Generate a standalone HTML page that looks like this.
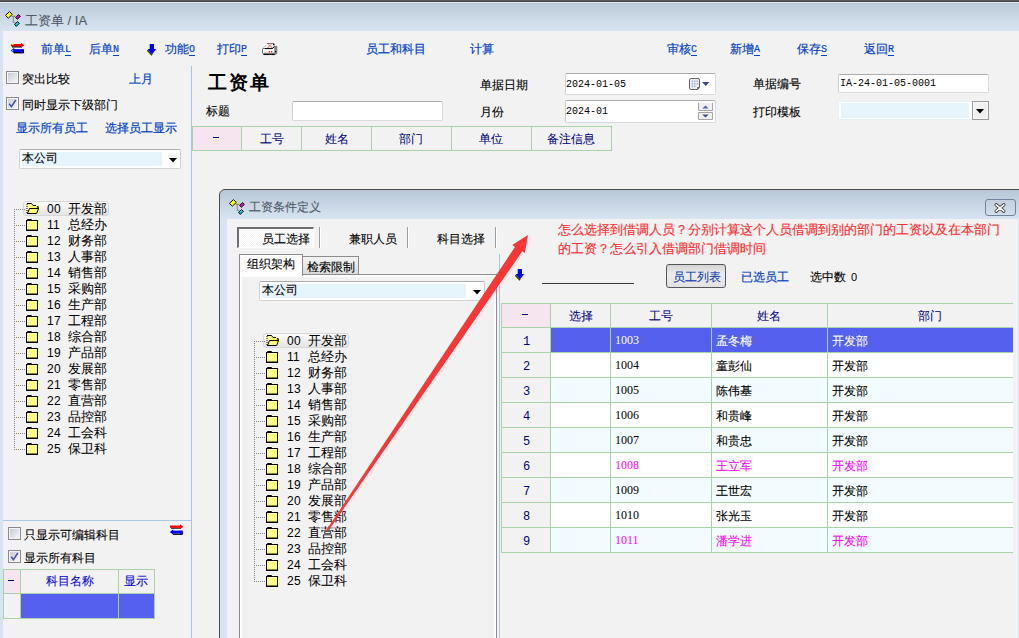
<!DOCTYPE html><html><head><meta charset="utf-8"><style>
*{margin:0;padding:0;box-sizing:border-box}
html,body{width:1019px;height:638px;overflow:hidden}
body{position:relative;background:#f2f2f2;font-family:"Liberation Sans",sans-serif;font-size:12px;line-height:12px;color:#000}
.t{position:absolute;white-space:nowrap;font-size:12px;line-height:12px;-webkit-text-stroke:0.1px currentColor}
.blue{-webkit-text-stroke:0.2px currentColor}
.nav{-webkit-text-stroke:0.05px currentColor}
.b{position:absolute}
.blue{color:#0444c8}
.nav{color:#000080}
.mono{font-family:"Liberation Mono",monospace;font-size:10px;line-height:10px;-webkit-text-stroke:0}
.ser{font-family:"Liberation Serif",serif;font-size:12px;line-height:12px;-webkit-text-stroke:0}
.acc{font-family:"Liberation Mono",monospace;font-size:10px;line-height:10px;display:inline-block;border-bottom:1px solid currentColor;padding-bottom:0;vertical-align:top;margin-top:2px;height:11px}
svg{position:absolute;overflow:visible}
.rn{font-family:"Liberation Mono",monospace;font-size:12px;line-height:12px;color:#000080;-webkit-text-stroke:0}
</style></head><body>
<div class="b" style="left:0px;top:0px;width:1019px;height:2px;background:linear-gradient(#5c5c5c,#444)"></div>
<div class="b" style="left:0px;top:2px;width:1019px;height:1px;background:#dfe5ec"></div>
<div class="b" style="left:0px;top:3px;width:1019px;height:28px;background:linear-gradient(#bbcad9,#d8e4f1)"></div>
<div class="b" style="left:0px;top:31px;width:3px;height:607px;background:#d6e3f1"></div>
<svg style="left:0px;top:8px" width="24" height="24" viewBox="0 8 24 24">
<path d="M11.6 16.4H15.4M13.3 16.4V22.3H15.2" stroke="#8c8c8c" stroke-width="1.1" fill="none"/>
<path d="M9.5 11.6L12.3 14.4L8.3 18.2L5.4 15.4Z" fill="#ffff00" stroke="#111" stroke-width="1"/>
<path d="M18.5 14.5L20.4 16.4L17.3 19.3L15.6 17.3Z" fill="#e800c8" stroke="#111" stroke-width="1"/>
<path d="M17.5 21.6L19.4 23.3L16.3 26.4L14.5 24.2Z" fill="#00d8e0" stroke="#111" stroke-width="1"/>
</svg>
<div class="t " style="left:25px;top:14px;color:#4e5866;font-size:13px;line-height:13px">工资单 / IA</div>
<svg style="left:0;top:30px" width="30" height="30" viewBox="0 30 30 30">
<rect x="14" y="47.3" width="7" height="1.8" fill="#fff"/>
<rect x="12" y="46.2" width="10" height="1.3" fill="#000"/>
<rect x="11" y="44" width="10.5" height="2.4" fill="#f00"/>
<path d="M21 42.8L24.3 45.2L21 47.8Z" fill="#f00"/>
<rect x="11.5" y="43.6" width="2" height="1.3" fill="#ff0"/>
<rect x="14" y="52" width="9.5" height="1.4" fill="#000"/>
<rect x="13.5" y="49.2" width="9" height="2.9" fill="#00f"/>
<path d="M14.3 47.8L10.8 50.6L14.3 53.4Z" fill="#00f"/>
<rect x="21" y="49" width="3" height="4" rx="1" fill="#00f"/>
<rect x="23" y="50" width="1" height="3" fill="#000"/>
<rect x="12" y="50" width="1.3" height="1.3" fill="#0ff"/>
</svg>
<div class="t blue" style="left:41px;top:43px;">前单<span class="acc">L</span></div>
<div class="t blue" style="left:89px;top:43px;">后单<span class="acc">N</span></div>
<svg style="left:146px;top:44px" width="12" height="13" viewBox="0 0 12 13">
<path d="M1.4 6.2L6 11.2" stroke="#3c3c00" stroke-width="1.6"/>
<path d="M3.7 0H8V5H10.2L6 10.6L1.6 5H3.7Z" fill="#0000ff"/>
</svg>
<div class="t blue" style="left:165px;top:43px;">功能<span class="acc">O</span></div>
<div class="t blue" style="left:217px;top:43px;">打印<span class="acc">P</span></div>
<svg style="left:258px;top:38px" width="22" height="22" viewBox="258 38 22 22">
<path d="M267 43.5H274" stroke="#7a7a7a" stroke-width="1"/>
<path d="M262.5 48.5L266.5 44.8" stroke="#9a9a9a" stroke-width="1" stroke-dasharray="1 0.8"/>
<path d="M263 48.5H272.5L274.5 46.3H276.8V53.2L275.3 54.6H264L262.5 53.2V49.5Z" fill="#fff" stroke="#606060" stroke-width="0.9"/>
<rect x="274.3" y="46.6" width="2.6" height="7.6" fill="#858585"/>
<path d="M263.5 52.6H274" stroke="#d8d8d8" stroke-width="1"/>
<path d="M267.5 48L271.5 44M268.5 44.2L272.5 48" stroke="#ff0000" stroke-width="1" stroke-dasharray="1 0.7"/>
<rect x="273" y="43.7" width="1.5" height="1.5" fill="#000"/>
<path d="M265 48.6H272.5L274.3 46.5" fill="none" stroke="#000" stroke-width="1"/>
<path d="M263.5 54.2H274.5" stroke="#000" stroke-width="1.5"/>
<rect x="268.8" y="51" width="1.3" height="1.3" fill="#f00"/><rect x="270.9" y="51" width="1.3" height="1.3" fill="#f00"/>
<rect x="275.1" y="51" width="1.2" height="1.2" fill="#000"/>
</svg>
<div class="t blue" style="left:366px;top:43px;">员工和科目</div>
<div class="t blue" style="left:470px;top:43px;">计算</div>
<div class="t blue" style="left:667px;top:43px;">审核<span class="acc">C</span></div>
<div class="t blue" style="left:730px;top:43px;">新增<span class="acc">A</span></div>
<div class="t blue" style="left:797px;top:43px;">保存<span class="acc">S</span></div>
<div class="t blue" style="left:864px;top:43px;">返回<span class="acc">R</span></div>
<div class="b" style="left:6px;top:71px;width:13px;height:13px;border:1px solid #8a8a8a;box-shadow:inset 0 0 0 1px #f4f4f4"></div>
<div class="b" style="left:8px;top:73px;width:9px;height:9px;background:linear-gradient(135deg,#c8ccd2,#f6f6f6)"></div>
<div class="t " style="left:22px;top:73px;">突出比较</div>
<div class="t blue" style="left:129px;top:73px;">上月</div>
<div class="b" style="left:6px;top:97px;width:13px;height:13px;border:1px solid #8a8a8a;box-shadow:inset 0 0 0 1px #f4f4f4"></div>
<div class="b" style="left:8px;top:99px;width:9px;height:9px;background:linear-gradient(135deg,#c8ccd2,#f6f6f6)"></div>
<svg style="left:6px;top:97px" width="13" height="13" viewBox="0 0 13 13"><path d="M3.2 6.8L5.4 9.6L9.8 3" stroke="#4458a8" stroke-width="1.6" fill="none"/></svg>
<div class="t " style="left:22px;top:99px;">同时显示下级部门</div>
<div class="t blue" style="left:16px;top:122px;">显示所有员工</div>
<div class="t blue" style="left:105px;top:122px;">选择员工显示</div>
<div class="b" style="left:19px;top:149px;width:162px;height:20px;border:1px solid #d2d2d2;border-top-color:#acacac;border-radius:2px;background:#fff"></div>
<div class="b" style="left:22px;top:152px;width:140px;height:14px;background:#e6f4fb"></div>
<div class="t " style="left:22px;top:152px;">本公司</div>
<svg style="left:169px;top:158px" width="9" height="5"><path d="M0 0H8L4 4.5Z" fill="#000"/></svg>
<div class="b" style="left:14px;top:209px;width:1px;height:241px;background:repeating-linear-gradient(#808080 0 1px,transparent 1px 2px)"></div>
<div class="b" style="left:23px;top:201px;width:86px;height:15px;border:1px solid #d8d8d8;border-radius:3px;background:linear-gradient(#fbfbfb,#e4e4e4)"></div>
<div class="b" style="left:14px;top:209px;width:11px;height:1px;background:repeating-linear-gradient(90deg,#808080 0 1px,transparent 1px 2px)"></div>
<svg style="left:26px;top:203px" width="14" height="13" viewBox="0 0 14 13">
<path d="M1 1H5.5L7 2.5H10.5L12.5 4.2L10.5 10.5H1Z" fill="#ffff70"/>
<path d="M1 0.5H5.5L7 2.5H10" fill="none" stroke="#000" stroke-width="1"/>
<path d="M10.8 3.6L12.8 4.4" stroke="#000" stroke-width="1.4"/>
<path d="M1.5 10.5L3.5 5.5H12.5" fill="none" stroke="#000" stroke-width="1"/>
<path d="M12.7 5L10.7 10.5" stroke="#000" stroke-width="1"/>
<path d="M1 10.5H10.5" stroke="#000" stroke-width="1"/>
<path d="M1 1V10" stroke="#000" stroke-width="1" stroke-dasharray="1 1"/>
</svg>
<div class="t " style="left:47px;top:203px;font-size:12px;line-height:12px;letter-spacing:0.33px;-webkit-text-stroke:0">00</div>
<div class="t " style="left:68px;top:202px;font-size:13px;line-height:13px;-webkit-text-stroke:0.05px currentColor">开发部</div>
<div class="b" style="left:14px;top:225px;width:11px;height:1px;background:repeating-linear-gradient(90deg,#808080 0 1px,transparent 1px 2px)"></div>
<svg style="left:26px;top:219px" width="13" height="13" viewBox="0 0 13 13">
<path d="M1.5 2V0.5H5.5L6.8 2" fill="#fff" stroke="#000" stroke-width="1"/>
<rect x="0.5" y="1.5" width="11" height="10" fill="#ffff80" stroke="#000" stroke-width="1"/>
<path d="M0.5 11.2H11.5" stroke="#000" stroke-width="1.4"/>
</svg>
<div class="t " style="left:47px;top:219px;font-size:12px;line-height:12px;letter-spacing:0.33px;-webkit-text-stroke:0">11</div>
<div class="t " style="left:68px;top:218px;font-size:13px;line-height:13px;-webkit-text-stroke:0.05px currentColor">总经办</div>
<div class="b" style="left:14px;top:241px;width:11px;height:1px;background:repeating-linear-gradient(90deg,#808080 0 1px,transparent 1px 2px)"></div>
<svg style="left:26px;top:235px" width="13" height="13" viewBox="0 0 13 13">
<path d="M1.5 2V0.5H5.5L6.8 2" fill="#fff" stroke="#000" stroke-width="1"/>
<rect x="0.5" y="1.5" width="11" height="10" fill="#ffff80" stroke="#000" stroke-width="1"/>
<path d="M0.5 11.2H11.5" stroke="#000" stroke-width="1.4"/>
</svg>
<div class="t " style="left:47px;top:235px;font-size:12px;line-height:12px;letter-spacing:0.33px;-webkit-text-stroke:0">12</div>
<div class="t " style="left:68px;top:234px;font-size:13px;line-height:13px;-webkit-text-stroke:0.05px currentColor">财务部</div>
<div class="b" style="left:14px;top:257px;width:11px;height:1px;background:repeating-linear-gradient(90deg,#808080 0 1px,transparent 1px 2px)"></div>
<svg style="left:26px;top:251px" width="13" height="13" viewBox="0 0 13 13">
<path d="M1.5 2V0.5H5.5L6.8 2" fill="#fff" stroke="#000" stroke-width="1"/>
<rect x="0.5" y="1.5" width="11" height="10" fill="#ffff80" stroke="#000" stroke-width="1"/>
<path d="M0.5 11.2H11.5" stroke="#000" stroke-width="1.4"/>
</svg>
<div class="t " style="left:47px;top:251px;font-size:12px;line-height:12px;letter-spacing:0.33px;-webkit-text-stroke:0">13</div>
<div class="t " style="left:68px;top:250px;font-size:13px;line-height:13px;-webkit-text-stroke:0.05px currentColor">人事部</div>
<div class="b" style="left:14px;top:273px;width:11px;height:1px;background:repeating-linear-gradient(90deg,#808080 0 1px,transparent 1px 2px)"></div>
<svg style="left:26px;top:267px" width="13" height="13" viewBox="0 0 13 13">
<path d="M1.5 2V0.5H5.5L6.8 2" fill="#fff" stroke="#000" stroke-width="1"/>
<rect x="0.5" y="1.5" width="11" height="10" fill="#ffff80" stroke="#000" stroke-width="1"/>
<path d="M0.5 11.2H11.5" stroke="#000" stroke-width="1.4"/>
</svg>
<div class="t " style="left:47px;top:267px;font-size:12px;line-height:12px;letter-spacing:0.33px;-webkit-text-stroke:0">14</div>
<div class="t " style="left:68px;top:266px;font-size:13px;line-height:13px;-webkit-text-stroke:0.05px currentColor">销售部</div>
<div class="b" style="left:14px;top:289px;width:11px;height:1px;background:repeating-linear-gradient(90deg,#808080 0 1px,transparent 1px 2px)"></div>
<svg style="left:26px;top:283px" width="13" height="13" viewBox="0 0 13 13">
<path d="M1.5 2V0.5H5.5L6.8 2" fill="#fff" stroke="#000" stroke-width="1"/>
<rect x="0.5" y="1.5" width="11" height="10" fill="#ffff80" stroke="#000" stroke-width="1"/>
<path d="M0.5 11.2H11.5" stroke="#000" stroke-width="1.4"/>
</svg>
<div class="t " style="left:47px;top:283px;font-size:12px;line-height:12px;letter-spacing:0.33px;-webkit-text-stroke:0">15</div>
<div class="t " style="left:68px;top:282px;font-size:13px;line-height:13px;-webkit-text-stroke:0.05px currentColor">采购部</div>
<div class="b" style="left:14px;top:305px;width:11px;height:1px;background:repeating-linear-gradient(90deg,#808080 0 1px,transparent 1px 2px)"></div>
<svg style="left:26px;top:299px" width="13" height="13" viewBox="0 0 13 13">
<path d="M1.5 2V0.5H5.5L6.8 2" fill="#fff" stroke="#000" stroke-width="1"/>
<rect x="0.5" y="1.5" width="11" height="10" fill="#ffff80" stroke="#000" stroke-width="1"/>
<path d="M0.5 11.2H11.5" stroke="#000" stroke-width="1.4"/>
</svg>
<div class="t " style="left:47px;top:299px;font-size:12px;line-height:12px;letter-spacing:0.33px;-webkit-text-stroke:0">16</div>
<div class="t " style="left:68px;top:298px;font-size:13px;line-height:13px;-webkit-text-stroke:0.05px currentColor">生产部</div>
<div class="b" style="left:14px;top:321px;width:11px;height:1px;background:repeating-linear-gradient(90deg,#808080 0 1px,transparent 1px 2px)"></div>
<svg style="left:26px;top:315px" width="13" height="13" viewBox="0 0 13 13">
<path d="M1.5 2V0.5H5.5L6.8 2" fill="#fff" stroke="#000" stroke-width="1"/>
<rect x="0.5" y="1.5" width="11" height="10" fill="#ffff80" stroke="#000" stroke-width="1"/>
<path d="M0.5 11.2H11.5" stroke="#000" stroke-width="1.4"/>
</svg>
<div class="t " style="left:47px;top:315px;font-size:12px;line-height:12px;letter-spacing:0.33px;-webkit-text-stroke:0">17</div>
<div class="t " style="left:68px;top:314px;font-size:13px;line-height:13px;-webkit-text-stroke:0.05px currentColor">工程部</div>
<div class="b" style="left:14px;top:337px;width:11px;height:1px;background:repeating-linear-gradient(90deg,#808080 0 1px,transparent 1px 2px)"></div>
<svg style="left:26px;top:331px" width="13" height="13" viewBox="0 0 13 13">
<path d="M1.5 2V0.5H5.5L6.8 2" fill="#fff" stroke="#000" stroke-width="1"/>
<rect x="0.5" y="1.5" width="11" height="10" fill="#ffff80" stroke="#000" stroke-width="1"/>
<path d="M0.5 11.2H11.5" stroke="#000" stroke-width="1.4"/>
</svg>
<div class="t " style="left:47px;top:331px;font-size:12px;line-height:12px;letter-spacing:0.33px;-webkit-text-stroke:0">18</div>
<div class="t " style="left:68px;top:330px;font-size:13px;line-height:13px;-webkit-text-stroke:0.05px currentColor">综合部</div>
<div class="b" style="left:14px;top:353px;width:11px;height:1px;background:repeating-linear-gradient(90deg,#808080 0 1px,transparent 1px 2px)"></div>
<svg style="left:26px;top:347px" width="13" height="13" viewBox="0 0 13 13">
<path d="M1.5 2V0.5H5.5L6.8 2" fill="#fff" stroke="#000" stroke-width="1"/>
<rect x="0.5" y="1.5" width="11" height="10" fill="#ffff80" stroke="#000" stroke-width="1"/>
<path d="M0.5 11.2H11.5" stroke="#000" stroke-width="1.4"/>
</svg>
<div class="t " style="left:47px;top:347px;font-size:12px;line-height:12px;letter-spacing:0.33px;-webkit-text-stroke:0">19</div>
<div class="t " style="left:68px;top:346px;font-size:13px;line-height:13px;-webkit-text-stroke:0.05px currentColor">产品部</div>
<div class="b" style="left:14px;top:369px;width:11px;height:1px;background:repeating-linear-gradient(90deg,#808080 0 1px,transparent 1px 2px)"></div>
<svg style="left:26px;top:363px" width="13" height="13" viewBox="0 0 13 13">
<path d="M1.5 2V0.5H5.5L6.8 2" fill="#fff" stroke="#000" stroke-width="1"/>
<rect x="0.5" y="1.5" width="11" height="10" fill="#ffff80" stroke="#000" stroke-width="1"/>
<path d="M0.5 11.2H11.5" stroke="#000" stroke-width="1.4"/>
</svg>
<div class="t " style="left:47px;top:363px;font-size:12px;line-height:12px;letter-spacing:0.33px;-webkit-text-stroke:0">20</div>
<div class="t " style="left:68px;top:362px;font-size:13px;line-height:13px;-webkit-text-stroke:0.05px currentColor">发展部</div>
<div class="b" style="left:14px;top:385px;width:11px;height:1px;background:repeating-linear-gradient(90deg,#808080 0 1px,transparent 1px 2px)"></div>
<svg style="left:26px;top:379px" width="13" height="13" viewBox="0 0 13 13">
<path d="M1.5 2V0.5H5.5L6.8 2" fill="#fff" stroke="#000" stroke-width="1"/>
<rect x="0.5" y="1.5" width="11" height="10" fill="#ffff80" stroke="#000" stroke-width="1"/>
<path d="M0.5 11.2H11.5" stroke="#000" stroke-width="1.4"/>
</svg>
<div class="t " style="left:47px;top:379px;font-size:12px;line-height:12px;letter-spacing:0.33px;-webkit-text-stroke:0">21</div>
<div class="t " style="left:68px;top:378px;font-size:13px;line-height:13px;-webkit-text-stroke:0.05px currentColor">零售部</div>
<div class="b" style="left:14px;top:401px;width:11px;height:1px;background:repeating-linear-gradient(90deg,#808080 0 1px,transparent 1px 2px)"></div>
<svg style="left:26px;top:395px" width="13" height="13" viewBox="0 0 13 13">
<path d="M1.5 2V0.5H5.5L6.8 2" fill="#fff" stroke="#000" stroke-width="1"/>
<rect x="0.5" y="1.5" width="11" height="10" fill="#ffff80" stroke="#000" stroke-width="1"/>
<path d="M0.5 11.2H11.5" stroke="#000" stroke-width="1.4"/>
</svg>
<div class="t " style="left:47px;top:395px;font-size:12px;line-height:12px;letter-spacing:0.33px;-webkit-text-stroke:0">22</div>
<div class="t " style="left:68px;top:394px;font-size:13px;line-height:13px;-webkit-text-stroke:0.05px currentColor">直营部</div>
<div class="b" style="left:14px;top:417px;width:11px;height:1px;background:repeating-linear-gradient(90deg,#808080 0 1px,transparent 1px 2px)"></div>
<svg style="left:26px;top:411px" width="13" height="13" viewBox="0 0 13 13">
<path d="M1.5 2V0.5H5.5L6.8 2" fill="#fff" stroke="#000" stroke-width="1"/>
<rect x="0.5" y="1.5" width="11" height="10" fill="#ffff80" stroke="#000" stroke-width="1"/>
<path d="M0.5 11.2H11.5" stroke="#000" stroke-width="1.4"/>
</svg>
<div class="t " style="left:47px;top:411px;font-size:12px;line-height:12px;letter-spacing:0.33px;-webkit-text-stroke:0">23</div>
<div class="t " style="left:68px;top:410px;font-size:13px;line-height:13px;-webkit-text-stroke:0.05px currentColor">品控部</div>
<div class="b" style="left:14px;top:433px;width:11px;height:1px;background:repeating-linear-gradient(90deg,#808080 0 1px,transparent 1px 2px)"></div>
<svg style="left:26px;top:427px" width="13" height="13" viewBox="0 0 13 13">
<path d="M1.5 2V0.5H5.5L6.8 2" fill="#fff" stroke="#000" stroke-width="1"/>
<rect x="0.5" y="1.5" width="11" height="10" fill="#ffff80" stroke="#000" stroke-width="1"/>
<path d="M0.5 11.2H11.5" stroke="#000" stroke-width="1.4"/>
</svg>
<div class="t " style="left:47px;top:427px;font-size:12px;line-height:12px;letter-spacing:0.33px;-webkit-text-stroke:0">24</div>
<div class="t " style="left:68px;top:426px;font-size:13px;line-height:13px;-webkit-text-stroke:0.05px currentColor">工会科</div>
<div class="b" style="left:14px;top:449px;width:11px;height:1px;background:repeating-linear-gradient(90deg,#808080 0 1px,transparent 1px 2px)"></div>
<svg style="left:26px;top:443px" width="13" height="13" viewBox="0 0 13 13">
<path d="M1.5 2V0.5H5.5L6.8 2" fill="#fff" stroke="#000" stroke-width="1"/>
<rect x="0.5" y="1.5" width="11" height="10" fill="#ffff80" stroke="#000" stroke-width="1"/>
<path d="M0.5 11.2H11.5" stroke="#000" stroke-width="1.4"/>
</svg>
<div class="t " style="left:47px;top:443px;font-size:12px;line-height:12px;letter-spacing:0.33px;-webkit-text-stroke:0">25</div>
<div class="t " style="left:68px;top:442px;font-size:13px;line-height:13px;-webkit-text-stroke:0.05px currentColor">保卫科</div>
<div class="b" style="left:3px;top:520px;width:188px;height:1px;background:#a9c9ea"></div>
<div class="b" style="left:8px;top:527px;width:13px;height:13px;border:1px solid #8a8a8a;box-shadow:inset 0 0 0 1px #f4f4f4"></div>
<div class="b" style="left:10px;top:529px;width:9px;height:9px;background:linear-gradient(135deg,#c8ccd2,#f6f6f6)"></div>
<div class="t " style="left:24px;top:529px;">只显示可编辑科目</div>
<svg style="left:160px;top:520px" width="30" height="20" viewBox="160 520 30 20">
<rect x="173" y="528.5" width="7" height="1.5" fill="#fff"/>
<rect x="171" y="527.5" width="10" height="1.2" fill="#000"/>
<rect x="170" y="525.5" width="10.5" height="2.3" fill="#f00"/>
<path d="M180 524.3L183.3 526.7L180 529.2Z" fill="#f00"/>
<rect x="173" y="533.5" width="9.5" height="1.4" fill="#000"/>
<rect x="172.5" y="530.6" width="9" height="2.8" fill="#00f"/>
<path d="M173.3 529.2L169.8 532L173.3 534.8Z" fill="#00f"/>
<rect x="180" y="530.4" width="3" height="4" rx="1" fill="#00f"/>
</svg>
<div class="b" style="left:8px;top:550px;width:13px;height:13px;border:1px solid #8a8a8a;box-shadow:inset 0 0 0 1px #f4f4f4"></div>
<div class="b" style="left:10px;top:552px;width:9px;height:9px;background:linear-gradient(135deg,#c8ccd2,#f6f6f6)"></div>
<svg style="left:8px;top:550px" width="13" height="13" viewBox="0 0 13 13"><path d="M3.2 6.8L5.4 9.6L9.8 3" stroke="#4458a8" stroke-width="1.6" fill="none"/></svg>
<div class="t " style="left:24px;top:552px;">显示所有科目</div>
<div class="b" style="left:3px;top:569px;width:152px;height:50px;border:1px solid #a8d2a8"></div>
<div class="b" style="left:4px;top:570px;width:16px;height:23px;background:#f6e4ee"></div>
<div class="b" style="left:20px;top:569px;width:1px;height:50px;background:#a8d2a8"></div>
<div class="b" style="left:118px;top:569px;width:1px;height:50px;background:#a8d2a8"></div>
<div class="b" style="left:3px;top:593px;width:152px;height:1px;background:#a8d2a8"></div>
<div class="b" style="left:21px;top:594px;width:97px;height:24px;background:#5561ee"></div>
<div class="b" style="left:119px;top:594px;width:35px;height:24px;background:#5561ee"></div>
<div class="b" style="left:8px;top:580px;width:6px;height:1px;background:#000080"></div>
<div class="t " style="left:46px;top:575px;color:#0808d8">科目名称</div>
<div class="t " style="left:124px;top:575px;color:#0808d8">显示</div>
<div class="b" style="left:191px;top:66px;width:1px;height:572px;background:#a6c6e8"></div>
<div class="t " style="left:208px;top:73px;font-size:19px;line-height:19px;font-weight:bold;color:#000;letter-spacing:2px;-webkit-text-stroke:0">工资单</div>
<div class="t " style="left:206px;top:105px;">标题</div>
<div class="b" style="left:292px;top:101px;width:151px;height:20px;border:1px solid #dadada;border-top-color:#ababab;border-left-color:#cfcfcf;border-radius:2px;background:#fff"></div>
<div class="t " style="left:480px;top:79px;">单据日期</div>
<div class="b" style="left:565px;top:73px;width:151px;height:22px;border:1px solid #dadada;border-top-color:#ababab;border-left-color:#cfcfcf;border-radius:2px;background:#fff"></div>
<div class="t mono" style="left:566px;top:80px;">2024-01-05</div>
<svg style="left:680px;top:72px" width="40" height="25" viewBox="680 72 40 25">
<path d="M689.5 80Q689.5 78.5 691 78.5H698Q699.5 78.5 699.5 80V87.5L697.5 89.5H691Q689.5 89.5 689.5 88Z" fill="#eef2f8" stroke="#6e6468" stroke-width="1"/>
<g fill="#aab6ca"><rect x="691.5" y="80.5" width="1.6" height="1.6"/><rect x="694" y="80.5" width="1.6" height="1.6"/><rect x="696.5" y="80.5" width="1.6" height="1.6"/>
<rect x="691.5" y="83" width="1.6" height="1.6"/><rect x="694" y="83" width="1.6" height="1.6"/><rect x="696.5" y="83" width="1.6" height="1.6"/>
<rect x="691.5" y="85.5" width="1.6" height="1.6"/><rect x="694" y="85.5" width="1.6" height="1.6"/></g>
<path d="M697.5 89.5V87.5H699.5" fill="none" stroke="#6e6468" stroke-width="1"/>
<path d="M702 82H709.5L705.75 86Z" fill="#3a4a80"/>
</svg>
<div class="t " style="left:480px;top:106px;">月份</div>
<div class="b" style="left:565px;top:100px;width:151px;height:23px;border:1px solid #dadada;border-top-color:#ababab;border-left-color:#cfcfcf;border-radius:2px;background:#fff"></div>
<div class="t mono" style="left:566px;top:107px;">2024-01</div>
<svg style="left:690px;top:100px" width="30" height="25" viewBox="690 100 30 25">
<path d="M698.5 103V110.5H712.5V103" fill="#f0f0f0" stroke="#a4a4a4" stroke-width="1"/>
<path d="M698.5 112.5H712.5V119.5H698.5Z" fill="#f0f0f0" stroke="#a4a4a4" stroke-width="1"/>
<path d="M702.3 108.6H708.7L705.5 105.5Z" fill="#4a64b8"/>
<path d="M702.3 114.6H708.7L705.5 117.6Z" fill="#3c4a80"/>
</svg>
<div class="t " style="left:753px;top:78px;">单据编号</div>
<div class="b" style="left:838px;top:74px;width:151px;height:19px;border:1px solid #dadada;border-top-color:#ababab;border-left-color:#cfcfcf;border-radius:2px;background:#fff"></div>
<div class="t mono" style="left:840px;top:79px;">IA-24-01-05-0001</div>
<div class="t " style="left:753px;top:106px;">打印模板</div>
<div class="b" style="left:838px;top:101px;width:151px;height:19px;border:1px solid #e2f2f8;background:#fff"></div>
<div class="b" style="left:841px;top:103px;width:128px;height:15px;background:#e6f4fb"></div>
<div class="b" style="left:972px;top:101px;width:17px;height:19px;border:1px solid #9a9a9a;background:#f0f0f0;box-shadow:inset 0 0 0 1px #fafafa"></div>
<svg style="left:976px;top:109px" width="9" height="5"><path d="M0 0H8L4 4.5Z" fill="#000"/></svg>
<div class="b" style="left:192px;top:126px;width:420px;height:25px;border:1px solid #a8d2a8"></div>
<div class="b" style="left:193px;top:127px;width:48px;height:23px;background:#f6e4ee"></div>
<div class="b" style="left:241px;top:126px;width:1px;height:25px;background:#a8d2a8"></div>
<div class="b" style="left:301px;top:126px;width:1px;height:25px;background:#a8d2a8"></div>
<div class="b" style="left:371px;top:126px;width:1px;height:25px;background:#a8d2a8"></div>
<div class="b" style="left:451px;top:126px;width:1px;height:25px;background:#a8d2a8"></div>
<div class="b" style="left:531px;top:126px;width:1px;height:25px;background:#a8d2a8"></div>
<div class="b" style="left:213px;top:137px;width:6px;height:1px;background:#000080"></div>
<div class="t nav" style="left:260px;top:133px;">工号</div>
<div class="t nav" style="left:325px;top:133px;">姓名</div>
<div class="t nav" style="left:399px;top:133px;">部门</div>
<div class="t nav" style="left:479px;top:133px;">单位</div>
<div class="t nav" style="left:547px;top:133px;">备注信息</div>
<div class="b" style="left:219px;top:189px;width:820px;height:470px;border:1px solid #4c4c4c;border-radius:6px 6px 0 0;background:linear-gradient(#b8c7d7,#d7e4f1 29px,#d7e4f1)"></div>
<div class="b" style="left:227px;top:219px;width:791px;height:419px;background:#f2f2f2"></div>
<svg style="left:224px;top:196px" width="24" height="24" viewBox="0 8 24 24">
<path d="M11.6 16.4H15.4M13.3 16.4V22.3H15.2" stroke="#8c8c8c" stroke-width="1.1" fill="none"/>
<path d="M9.5 11.6L12.3 14.4L8.3 18.2L5.4 15.4Z" fill="#ffff00" stroke="#111" stroke-width="1"/>
<path d="M18.5 14.5L20.4 16.4L17.3 19.3L15.6 17.3Z" fill="#e800c8" stroke="#111" stroke-width="1"/>
<path d="M17.5 21.6L19.4 23.3L16.3 26.4L14.5 24.2Z" fill="#00d8e0" stroke="#111" stroke-width="1"/>
</svg>
<div class="t " style="left:249px;top:201px;color:#4e5866">工资条件定义</div>
<div class="b" style="left:985px;top:199px;width:31px;height:17px;border:1px solid #7482a0;border-radius:3px;background:linear-gradient(#c4d0de,#d2deea)"></div>
<svg style="left:994px;top:203px" width="12" height="10" viewBox="0 0 12 10">
<path d="M2.2 1.8L9.8 8.2M9.8 1.8L2.2 8.2" stroke="#3a3a3a" stroke-width="3.4" stroke-linecap="round"/>
<path d="M2.2 1.8L9.8 8.2M9.8 1.8L2.2 8.2" stroke="#f6f6f6" stroke-width="1.7" stroke-linecap="round"/>
</svg>
<div class="b" style="left:237px;top:227px;width:77px;height:21px;border-top:2px solid #6e6e6e;border-left:2px solid #6e6e6e;border-right:1px solid #fff;border-bottom:1px solid #fff;background:repeating-conic-gradient(#f4f4f4 0 25%,#fff 0 50%) 0 0/2px 2px"></div>
<div class="t " style="left:262px;top:233px;">员工选择</div>
<div class="b" style="left:319px;top:227px;width:1px;height:21px;background:#9c9c9c"></div>
<div class="b" style="left:320px;top:227px;width:1px;height:21px;background:#fff"></div>
<div class="b" style="left:407px;top:227px;width:1px;height:21px;background:#9c9c9c"></div>
<div class="b" style="left:408px;top:227px;width:1px;height:21px;background:#fff"></div>
<div class="b" style="left:495px;top:227px;width:1px;height:21px;background:#9c9c9c"></div>
<div class="b" style="left:496px;top:227px;width:1px;height:21px;background:#fff"></div>
<div class="t " style="left:349px;top:233px;">兼职人员</div>
<div class="t " style="left:437px;top:233px;">科目选择</div>
<div class="b" style="left:239px;top:274px;width:258px;height:400px;border:1px solid #8c8c8c;background:#fff"></div>
<div class="b" style="left:242px;top:277px;width:252px;height:361px;background:#f2f2f2"></div>
<div class="b" style="left:239px;top:254px;width:64px;height:22px;border:1px solid #8c8c8c;border-bottom:none;background:#fff"></div>
<div class="t " style="left:247px;top:258px;">组织架构</div>
<div class="b" style="left:302px;top:256px;width:57px;height:19px;border:1px solid #8c8c8c;background:linear-gradient(#f4f4f4,#dadada)"></div>
<div class="t " style="left:307px;top:261px;">检索限制</div>
<div class="b" style="left:259px;top:281px;width:226px;height:20px;border:1px solid #d2d2d2;border-top-color:#acacac;border-radius:2px;background:#fff"></div>
<div class="b" style="left:262px;top:284px;width:204px;height:14px;background:#e6f4fb"></div>
<div class="t " style="left:262px;top:284px;">本公司</div>
<svg style="left:473px;top:290px" width="9" height="5"><path d="M0 0H8L4 4.5Z" fill="#000"/></svg>
<div class="b" style="left:254px;top:341px;width:1px;height:241px;background:repeating-linear-gradient(#808080 0 1px,transparent 1px 2px)"></div>
<div class="b" style="left:263px;top:333px;width:86px;height:15px;border:1px solid #d8d8d8;border-radius:3px;background:linear-gradient(#fbfbfb,#e4e4e4)"></div>
<div class="b" style="left:254px;top:341px;width:11px;height:1px;background:repeating-linear-gradient(90deg,#808080 0 1px,transparent 1px 2px)"></div>
<svg style="left:266px;top:335px" width="14" height="13" viewBox="0 0 14 13">
<path d="M1 1H5.5L7 2.5H10.5L12.5 4.2L10.5 10.5H1Z" fill="#ffff70"/>
<path d="M1 0.5H5.5L7 2.5H10" fill="none" stroke="#000" stroke-width="1"/>
<path d="M10.8 3.6L12.8 4.4" stroke="#000" stroke-width="1.4"/>
<path d="M1.5 10.5L3.5 5.5H12.5" fill="none" stroke="#000" stroke-width="1"/>
<path d="M12.7 5L10.7 10.5" stroke="#000" stroke-width="1"/>
<path d="M1 10.5H10.5" stroke="#000" stroke-width="1"/>
<path d="M1 1V10" stroke="#000" stroke-width="1" stroke-dasharray="1 1"/>
</svg>
<div class="t " style="left:287px;top:335px;font-size:12px;line-height:12px;letter-spacing:0.33px;-webkit-text-stroke:0">00</div>
<div class="t " style="left:308px;top:334px;font-size:13px;line-height:13px;-webkit-text-stroke:0.05px currentColor">开发部</div>
<div class="b" style="left:254px;top:357px;width:11px;height:1px;background:repeating-linear-gradient(90deg,#808080 0 1px,transparent 1px 2px)"></div>
<svg style="left:266px;top:351px" width="13" height="13" viewBox="0 0 13 13">
<path d="M1.5 2V0.5H5.5L6.8 2" fill="#fff" stroke="#000" stroke-width="1"/>
<rect x="0.5" y="1.5" width="11" height="10" fill="#ffff80" stroke="#000" stroke-width="1"/>
<path d="M0.5 11.2H11.5" stroke="#000" stroke-width="1.4"/>
</svg>
<div class="t " style="left:287px;top:351px;font-size:12px;line-height:12px;letter-spacing:0.33px;-webkit-text-stroke:0">11</div>
<div class="t " style="left:308px;top:350px;font-size:13px;line-height:13px;-webkit-text-stroke:0.05px currentColor">总经办</div>
<div class="b" style="left:254px;top:373px;width:11px;height:1px;background:repeating-linear-gradient(90deg,#808080 0 1px,transparent 1px 2px)"></div>
<svg style="left:266px;top:367px" width="13" height="13" viewBox="0 0 13 13">
<path d="M1.5 2V0.5H5.5L6.8 2" fill="#fff" stroke="#000" stroke-width="1"/>
<rect x="0.5" y="1.5" width="11" height="10" fill="#ffff80" stroke="#000" stroke-width="1"/>
<path d="M0.5 11.2H11.5" stroke="#000" stroke-width="1.4"/>
</svg>
<div class="t " style="left:287px;top:367px;font-size:12px;line-height:12px;letter-spacing:0.33px;-webkit-text-stroke:0">12</div>
<div class="t " style="left:308px;top:366px;font-size:13px;line-height:13px;-webkit-text-stroke:0.05px currentColor">财务部</div>
<div class="b" style="left:254px;top:389px;width:11px;height:1px;background:repeating-linear-gradient(90deg,#808080 0 1px,transparent 1px 2px)"></div>
<svg style="left:266px;top:383px" width="13" height="13" viewBox="0 0 13 13">
<path d="M1.5 2V0.5H5.5L6.8 2" fill="#fff" stroke="#000" stroke-width="1"/>
<rect x="0.5" y="1.5" width="11" height="10" fill="#ffff80" stroke="#000" stroke-width="1"/>
<path d="M0.5 11.2H11.5" stroke="#000" stroke-width="1.4"/>
</svg>
<div class="t " style="left:287px;top:383px;font-size:12px;line-height:12px;letter-spacing:0.33px;-webkit-text-stroke:0">13</div>
<div class="t " style="left:308px;top:382px;font-size:13px;line-height:13px;-webkit-text-stroke:0.05px currentColor">人事部</div>
<div class="b" style="left:254px;top:405px;width:11px;height:1px;background:repeating-linear-gradient(90deg,#808080 0 1px,transparent 1px 2px)"></div>
<svg style="left:266px;top:399px" width="13" height="13" viewBox="0 0 13 13">
<path d="M1.5 2V0.5H5.5L6.8 2" fill="#fff" stroke="#000" stroke-width="1"/>
<rect x="0.5" y="1.5" width="11" height="10" fill="#ffff80" stroke="#000" stroke-width="1"/>
<path d="M0.5 11.2H11.5" stroke="#000" stroke-width="1.4"/>
</svg>
<div class="t " style="left:287px;top:399px;font-size:12px;line-height:12px;letter-spacing:0.33px;-webkit-text-stroke:0">14</div>
<div class="t " style="left:308px;top:398px;font-size:13px;line-height:13px;-webkit-text-stroke:0.05px currentColor">销售部</div>
<div class="b" style="left:254px;top:421px;width:11px;height:1px;background:repeating-linear-gradient(90deg,#808080 0 1px,transparent 1px 2px)"></div>
<svg style="left:266px;top:415px" width="13" height="13" viewBox="0 0 13 13">
<path d="M1.5 2V0.5H5.5L6.8 2" fill="#fff" stroke="#000" stroke-width="1"/>
<rect x="0.5" y="1.5" width="11" height="10" fill="#ffff80" stroke="#000" stroke-width="1"/>
<path d="M0.5 11.2H11.5" stroke="#000" stroke-width="1.4"/>
</svg>
<div class="t " style="left:287px;top:415px;font-size:12px;line-height:12px;letter-spacing:0.33px;-webkit-text-stroke:0">15</div>
<div class="t " style="left:308px;top:414px;font-size:13px;line-height:13px;-webkit-text-stroke:0.05px currentColor">采购部</div>
<div class="b" style="left:254px;top:437px;width:11px;height:1px;background:repeating-linear-gradient(90deg,#808080 0 1px,transparent 1px 2px)"></div>
<svg style="left:266px;top:431px" width="13" height="13" viewBox="0 0 13 13">
<path d="M1.5 2V0.5H5.5L6.8 2" fill="#fff" stroke="#000" stroke-width="1"/>
<rect x="0.5" y="1.5" width="11" height="10" fill="#ffff80" stroke="#000" stroke-width="1"/>
<path d="M0.5 11.2H11.5" stroke="#000" stroke-width="1.4"/>
</svg>
<div class="t " style="left:287px;top:431px;font-size:12px;line-height:12px;letter-spacing:0.33px;-webkit-text-stroke:0">16</div>
<div class="t " style="left:308px;top:430px;font-size:13px;line-height:13px;-webkit-text-stroke:0.05px currentColor">生产部</div>
<div class="b" style="left:254px;top:453px;width:11px;height:1px;background:repeating-linear-gradient(90deg,#808080 0 1px,transparent 1px 2px)"></div>
<svg style="left:266px;top:447px" width="13" height="13" viewBox="0 0 13 13">
<path d="M1.5 2V0.5H5.5L6.8 2" fill="#fff" stroke="#000" stroke-width="1"/>
<rect x="0.5" y="1.5" width="11" height="10" fill="#ffff80" stroke="#000" stroke-width="1"/>
<path d="M0.5 11.2H11.5" stroke="#000" stroke-width="1.4"/>
</svg>
<div class="t " style="left:287px;top:447px;font-size:12px;line-height:12px;letter-spacing:0.33px;-webkit-text-stroke:0">17</div>
<div class="t " style="left:308px;top:446px;font-size:13px;line-height:13px;-webkit-text-stroke:0.05px currentColor">工程部</div>
<div class="b" style="left:254px;top:469px;width:11px;height:1px;background:repeating-linear-gradient(90deg,#808080 0 1px,transparent 1px 2px)"></div>
<svg style="left:266px;top:463px" width="13" height="13" viewBox="0 0 13 13">
<path d="M1.5 2V0.5H5.5L6.8 2" fill="#fff" stroke="#000" stroke-width="1"/>
<rect x="0.5" y="1.5" width="11" height="10" fill="#ffff80" stroke="#000" stroke-width="1"/>
<path d="M0.5 11.2H11.5" stroke="#000" stroke-width="1.4"/>
</svg>
<div class="t " style="left:287px;top:463px;font-size:12px;line-height:12px;letter-spacing:0.33px;-webkit-text-stroke:0">18</div>
<div class="t " style="left:308px;top:462px;font-size:13px;line-height:13px;-webkit-text-stroke:0.05px currentColor">综合部</div>
<div class="b" style="left:254px;top:485px;width:11px;height:1px;background:repeating-linear-gradient(90deg,#808080 0 1px,transparent 1px 2px)"></div>
<svg style="left:266px;top:479px" width="13" height="13" viewBox="0 0 13 13">
<path d="M1.5 2V0.5H5.5L6.8 2" fill="#fff" stroke="#000" stroke-width="1"/>
<rect x="0.5" y="1.5" width="11" height="10" fill="#ffff80" stroke="#000" stroke-width="1"/>
<path d="M0.5 11.2H11.5" stroke="#000" stroke-width="1.4"/>
</svg>
<div class="t " style="left:287px;top:479px;font-size:12px;line-height:12px;letter-spacing:0.33px;-webkit-text-stroke:0">19</div>
<div class="t " style="left:308px;top:478px;font-size:13px;line-height:13px;-webkit-text-stroke:0.05px currentColor">产品部</div>
<div class="b" style="left:254px;top:501px;width:11px;height:1px;background:repeating-linear-gradient(90deg,#808080 0 1px,transparent 1px 2px)"></div>
<svg style="left:266px;top:495px" width="13" height="13" viewBox="0 0 13 13">
<path d="M1.5 2V0.5H5.5L6.8 2" fill="#fff" stroke="#000" stroke-width="1"/>
<rect x="0.5" y="1.5" width="11" height="10" fill="#ffff80" stroke="#000" stroke-width="1"/>
<path d="M0.5 11.2H11.5" stroke="#000" stroke-width="1.4"/>
</svg>
<div class="t " style="left:287px;top:495px;font-size:12px;line-height:12px;letter-spacing:0.33px;-webkit-text-stroke:0">20</div>
<div class="t " style="left:308px;top:494px;font-size:13px;line-height:13px;-webkit-text-stroke:0.05px currentColor">发展部</div>
<div class="b" style="left:254px;top:517px;width:11px;height:1px;background:repeating-linear-gradient(90deg,#808080 0 1px,transparent 1px 2px)"></div>
<svg style="left:266px;top:511px" width="13" height="13" viewBox="0 0 13 13">
<path d="M1.5 2V0.5H5.5L6.8 2" fill="#fff" stroke="#000" stroke-width="1"/>
<rect x="0.5" y="1.5" width="11" height="10" fill="#ffff80" stroke="#000" stroke-width="1"/>
<path d="M0.5 11.2H11.5" stroke="#000" stroke-width="1.4"/>
</svg>
<div class="t " style="left:287px;top:511px;font-size:12px;line-height:12px;letter-spacing:0.33px;-webkit-text-stroke:0">21</div>
<div class="t " style="left:308px;top:510px;font-size:13px;line-height:13px;-webkit-text-stroke:0.05px currentColor">零售部</div>
<div class="b" style="left:254px;top:533px;width:11px;height:1px;background:repeating-linear-gradient(90deg,#808080 0 1px,transparent 1px 2px)"></div>
<svg style="left:266px;top:527px" width="13" height="13" viewBox="0 0 13 13">
<path d="M1.5 2V0.5H5.5L6.8 2" fill="#fff" stroke="#000" stroke-width="1"/>
<rect x="0.5" y="1.5" width="11" height="10" fill="#ffff80" stroke="#000" stroke-width="1"/>
<path d="M0.5 11.2H11.5" stroke="#000" stroke-width="1.4"/>
</svg>
<div class="t " style="left:287px;top:527px;font-size:12px;line-height:12px;letter-spacing:0.33px;-webkit-text-stroke:0">22</div>
<div class="t " style="left:308px;top:526px;font-size:13px;line-height:13px;-webkit-text-stroke:0.05px currentColor">直营部</div>
<div class="b" style="left:254px;top:549px;width:11px;height:1px;background:repeating-linear-gradient(90deg,#808080 0 1px,transparent 1px 2px)"></div>
<svg style="left:266px;top:543px" width="13" height="13" viewBox="0 0 13 13">
<path d="M1.5 2V0.5H5.5L6.8 2" fill="#fff" stroke="#000" stroke-width="1"/>
<rect x="0.5" y="1.5" width="11" height="10" fill="#ffff80" stroke="#000" stroke-width="1"/>
<path d="M0.5 11.2H11.5" stroke="#000" stroke-width="1.4"/>
</svg>
<div class="t " style="left:287px;top:543px;font-size:12px;line-height:12px;letter-spacing:0.33px;-webkit-text-stroke:0">23</div>
<div class="t " style="left:308px;top:542px;font-size:13px;line-height:13px;-webkit-text-stroke:0.05px currentColor">品控部</div>
<div class="b" style="left:254px;top:565px;width:11px;height:1px;background:repeating-linear-gradient(90deg,#808080 0 1px,transparent 1px 2px)"></div>
<svg style="left:266px;top:559px" width="13" height="13" viewBox="0 0 13 13">
<path d="M1.5 2V0.5H5.5L6.8 2" fill="#fff" stroke="#000" stroke-width="1"/>
<rect x="0.5" y="1.5" width="11" height="10" fill="#ffff80" stroke="#000" stroke-width="1"/>
<path d="M0.5 11.2H11.5" stroke="#000" stroke-width="1.4"/>
</svg>
<div class="t " style="left:287px;top:559px;font-size:12px;line-height:12px;letter-spacing:0.33px;-webkit-text-stroke:0">24</div>
<div class="t " style="left:308px;top:558px;font-size:13px;line-height:13px;-webkit-text-stroke:0.05px currentColor">工会科</div>
<div class="b" style="left:254px;top:581px;width:11px;height:1px;background:repeating-linear-gradient(90deg,#808080 0 1px,transparent 1px 2px)"></div>
<svg style="left:266px;top:575px" width="13" height="13" viewBox="0 0 13 13">
<path d="M1.5 2V0.5H5.5L6.8 2" fill="#fff" stroke="#000" stroke-width="1"/>
<rect x="0.5" y="1.5" width="11" height="10" fill="#ffff80" stroke="#000" stroke-width="1"/>
<path d="M0.5 11.2H11.5" stroke="#000" stroke-width="1.4"/>
</svg>
<div class="t " style="left:287px;top:575px;font-size:12px;line-height:12px;letter-spacing:0.33px;-webkit-text-stroke:0">25</div>
<div class="t " style="left:308px;top:574px;font-size:13px;line-height:13px;-webkit-text-stroke:0.05px currentColor">保卫科</div>
<div class="b" style="left:499px;top:254px;width:1px;height:384px;background:#a6c6e8"></div>
<div class="t " style="left:558px;top:223px;color:#ff3030;font-size:13px;line-height:13px;-webkit-text-stroke:0.15px currentColor">怎么选择到借调人员？分别计算这个人员借调到别的部门的工资以及在本部门</div>
<div class="t " style="left:558px;top:242px;color:#ff3030;font-size:13px;line-height:13px;-webkit-text-stroke:0.15px currentColor">的工资？怎么引入借调部门借调时间</div>
<svg style="left:514px;top:269px" width="12" height="13" viewBox="0 0 12 13">
<path d="M1.4 6.2L6 11.2" stroke="#3c3c00" stroke-width="1.6"/>
<path d="M3.7 0H8V5H10.2L6 10.6L1.6 5H3.7Z" fill="#0000ff"/>
</svg>
<div class="b" style="left:542px;top:283px;width:92px;height:1px;background:#3c3c3c"></div>
<div class="b" style="left:666px;top:264px;width:60px;height:24px;border:1px solid #555;border-radius:3px;background:linear-gradient(#d4d4d4,#ececec 40%,#e2e2e2)"></div>
<div class="t " style="left:673px;top:271px;color:#1040b0">员工列表</div>
<div class="t blue" style="left:741px;top:271px;">已选员工</div>
<div class="t " style="left:810px;top:271px;">选中数</div>
<div class="t " style="left:851px;top:272px;font-size:11px;line-height:11px;-webkit-text-stroke:0">0</div>
<div class="b" style="left:501px;top:303px;width:512px;height:250px;background:#fff"></div>
<div class="b" style="left:502px;top:304px;width:48px;height:23px;background:#f6e4ee"></div>
<div class="b" style="left:551px;top:304px;width:462px;height:23px;background:#f2f2f2"></div>
<div class="b" style="left:502px;top:328px;width:48px;height:24px;background:#f2f2f2"></div>
<div class="b" style="left:551px;top:328px;width:462px;height:24px;background:#5561ee"></div>
<div class="t rn" style="left:523px;top:336px;">1</div>
<div class="t ser" style="left:615px;top:334px;color:#fff">1003</div>
<div class="t " style="left:716px;top:335px;color:#fff">孟冬梅</div>
<div class="t " style="left:832px;top:335px;color:#fff">开发部</div>
<div class="b" style="left:502px;top:353px;width:48px;height:24px;background:#f2f2f2"></div>
<div class="b" style="left:551px;top:353px;width:462px;height:24px;background:#ffffff"></div>
<div class="t rn" style="left:523px;top:361px;">2</div>
<div class="t ser" style="left:615px;top:359px;color:#000">1004</div>
<div class="t " style="left:716px;top:360px;color:#000">童彭仙</div>
<div class="t " style="left:832px;top:360px;color:#000">开发部</div>
<div class="b" style="left:502px;top:378px;width:48px;height:24px;background:#f2f2f2"></div>
<div class="b" style="left:551px;top:378px;width:462px;height:24px;background:#f2fbfd"></div>
<div class="t rn" style="left:523px;top:386px;">3</div>
<div class="t ser" style="left:615px;top:384px;color:#000">1005</div>
<div class="t " style="left:716px;top:385px;color:#000">陈伟基</div>
<div class="t " style="left:832px;top:385px;color:#000">开发部</div>
<div class="b" style="left:502px;top:403px;width:48px;height:24px;background:#f2f2f2"></div>
<div class="b" style="left:551px;top:403px;width:462px;height:24px;background:#ffffff"></div>
<div class="t rn" style="left:523px;top:411px;">4</div>
<div class="t ser" style="left:615px;top:409px;color:#000">1006</div>
<div class="t " style="left:716px;top:410px;color:#000">和贵峰</div>
<div class="t " style="left:832px;top:410px;color:#000">开发部</div>
<div class="b" style="left:502px;top:428px;width:48px;height:24px;background:#f2f2f2"></div>
<div class="b" style="left:551px;top:428px;width:462px;height:24px;background:#f2fbfd"></div>
<div class="t rn" style="left:523px;top:436px;">5</div>
<div class="t ser" style="left:615px;top:434px;color:#000">1007</div>
<div class="t " style="left:716px;top:435px;color:#000">和贵忠</div>
<div class="t " style="left:832px;top:435px;color:#000">开发部</div>
<div class="b" style="left:502px;top:453px;width:48px;height:24px;background:#f2f2f2"></div>
<div class="b" style="left:551px;top:453px;width:462px;height:24px;background:#ffffff"></div>
<div class="t rn" style="left:523px;top:461px;">6</div>
<div class="t ser" style="left:615px;top:459px;color:#ff00ff">1008</div>
<div class="t " style="left:716px;top:460px;color:#ff00ff">王立军</div>
<div class="t " style="left:832px;top:460px;color:#ff00ff">开发部</div>
<div class="b" style="left:502px;top:478px;width:48px;height:24px;background:#f2f2f2"></div>
<div class="b" style="left:551px;top:478px;width:462px;height:24px;background:#f2fbfd"></div>
<div class="t rn" style="left:523px;top:486px;">7</div>
<div class="t ser" style="left:615px;top:484px;color:#000">1009</div>
<div class="t " style="left:716px;top:485px;color:#000">王世宏</div>
<div class="t " style="left:832px;top:485px;color:#000">开发部</div>
<div class="b" style="left:502px;top:503px;width:48px;height:24px;background:#f2f2f2"></div>
<div class="b" style="left:551px;top:503px;width:462px;height:24px;background:#ffffff"></div>
<div class="t rn" style="left:523px;top:511px;">8</div>
<div class="t ser" style="left:615px;top:509px;color:#000">1010</div>
<div class="t " style="left:716px;top:510px;color:#000">张光玉</div>
<div class="t " style="left:832px;top:510px;color:#000">开发部</div>
<div class="b" style="left:502px;top:528px;width:48px;height:24px;background:#f2f2f2"></div>
<div class="b" style="left:551px;top:528px;width:462px;height:24px;background:#f2fbfd"></div>
<div class="t rn" style="left:523px;top:536px;">9</div>
<div class="t ser" style="left:615px;top:534px;color:#ff00ff">1011</div>
<div class="t " style="left:716px;top:535px;color:#ff00ff">潘学进</div>
<div class="t " style="left:832px;top:535px;color:#ff00ff">开发部</div>
<div class="b" style="left:501px;top:303px;width:1px;height:250px;background:#a8d2a8"></div>
<div class="b" style="left:550px;top:303px;width:1px;height:250px;background:#a8d2a8"></div>
<div class="b" style="left:610px;top:303px;width:1px;height:250px;background:#a8d2a8"></div>
<div class="b" style="left:711px;top:303px;width:1px;height:250px;background:#a8d2a8"></div>
<div class="b" style="left:827px;top:303px;width:1px;height:250px;background:#a8d2a8"></div>
<div class="b" style="left:501px;top:303px;width:512px;height:1px;background:#a8d2a8"></div>
<div class="b" style="left:501px;top:327px;width:512px;height:1px;background:#a8d2a8"></div>
<div class="b" style="left:501px;top:352px;width:512px;height:1px;background:#a8d2a8"></div>
<div class="b" style="left:501px;top:377px;width:512px;height:1px;background:#a8d2a8"></div>
<div class="b" style="left:501px;top:402px;width:512px;height:1px;background:#a8d2a8"></div>
<div class="b" style="left:501px;top:427px;width:512px;height:1px;background:#a8d2a8"></div>
<div class="b" style="left:501px;top:452px;width:512px;height:1px;background:#a8d2a8"></div>
<div class="b" style="left:501px;top:477px;width:512px;height:1px;background:#a8d2a8"></div>
<div class="b" style="left:501px;top:502px;width:512px;height:1px;background:#a8d2a8"></div>
<div class="b" style="left:501px;top:527px;width:512px;height:1px;background:#a8d2a8"></div>
<div class="b" style="left:501px;top:552px;width:512px;height:1px;background:#a8d2a8"></div>
<div class="b" style="left:522px;top:314px;width:6px;height:1px;background:#000080"></div>
<div class="t nav" style="left:569px;top:310px;">选择</div>
<div class="t nav" style="left:649px;top:310px;">工号</div>
<div class="t nav" style="left:757px;top:310px;">姓名</div>
<div class="t nav" style="left:918px;top:310px;">部门</div>
<svg style="left:0;top:0" width="1019" height="638" viewBox="0 0 1019 638">
<path d="M326 530.6L514.8 247.2L512.5 244.7L528 234.9L524.7 253.3L522.5 251L328.6 530.4Z" fill="#ff3434"/>
</svg>
</body></html>
